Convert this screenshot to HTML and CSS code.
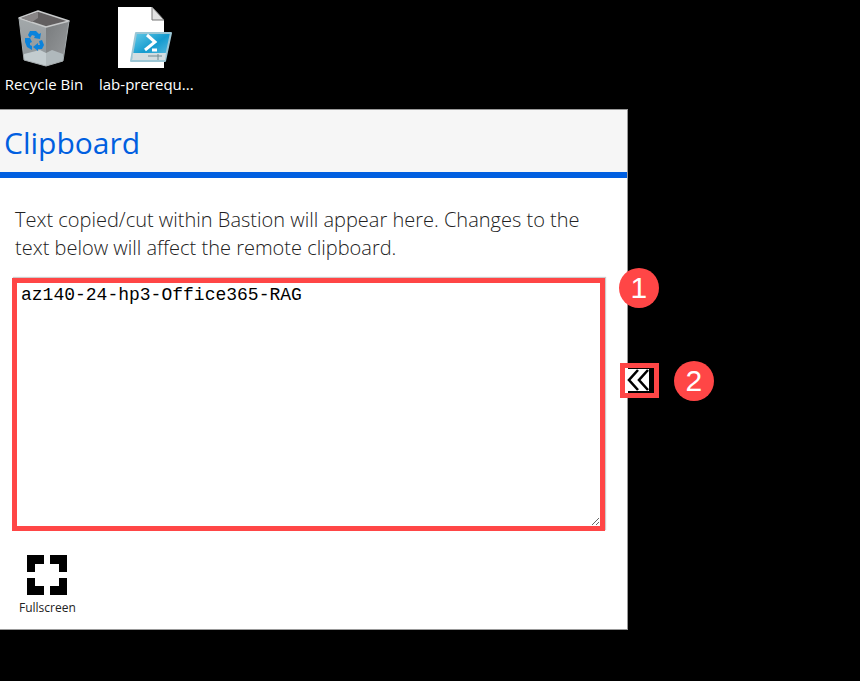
FILE: index.html
```html
<!DOCTYPE html>
<html lang="en">
<head>
<meta charset="utf-8">
<meta name="viewport" content="width=device-width, initial-scale=1">
<title>Bastion session</title>
<link rel="stylesheet" href="styles.css">
</head>
<body>
<main class="desktop">
  <nav class="shortcuts" aria-label="Desktop icons">
    <a class="shortcut" href="#recycle">
      <svg class="shortcut-icon" viewBox="0 0 64 64" aria-hidden="true">
        <defs>
          <linearGradient id="binLeft" x1="0" y1="0" x2="0" y2="1"><stop offset="0" stop-color="#a3a8aa"/><stop offset="1" stop-color="#8d9599"/></linearGradient>
          <linearGradient id="binRight" x1="0" y1="0" x2="1" y2="1"><stop offset="0" stop-color="#787b7d"/><stop offset="1" stop-color="#999c9e"/></linearGradient>
        </defs>
        <path d="M7 14 34 23 34 62 12 56Z" fill="url(#binLeft)"/>
        <path d="M34 23 57 17 51 57 34 62Z" fill="url(#binRight)"/>
        <path d="M12 50 28 46 34 49 34 62 12 56Z" fill="#c3cccf"/>
        <path d="M34 49 40 46 51 50 51 57 34 62Z" fill="#b0b9bc"/>
        <path d="M7 14 26 7 57 17 34 23Z" fill="#625f60" stroke="#c8cacb" stroke-width="1.5" stroke-linejoin="round"/>
        <path d="M26 8 26 14 20 18 9 14Z" fill="#888586"/>
        <path d="M7 14 12 56 34 62 51 57 57 17" fill="none" stroke="#a4aaac"/>
        <g fill="#0b83dc">
          <path d="M16 31 18 27 24 27 27 30 29 29 28 35 22 34 23 32 20 31 18 34Z"/>
          <path d="M13 34 18 34 20 38 18 39 18 41 20 42 20 46 15 43 13 38Z"/>
          <path d="M27 37 30 36 32 41 30 45 26 45 26 47 21 43 26 39 26 41 28 41Z"/>
        </g>
      </svg>
      <span class="shortcut-label">Recycle Bin</span>
    </a>
    <a class="shortcut" href="#lab">
      <svg class="shortcut-icon" viewBox="0 0 64 64" aria-hidden="true">
        <defs><linearGradient id="shell" x1="0" y1="0" x2="1" y2="1"><stop offset="0" stop-color="#69cde9"/><stop offset=".5" stop-color="#159bcf"/><stop offset="1" stop-color="#70c6e5"/></linearGradient></defs>
        <path d="M4 3H38L50 16V64H4Z" fill="#fff"/>
        <path d="M38 3V16H50Z" fill="#e2e2e2" stroke="#777"/>
        <path d="M22 29H57L51 57H17Z" fill="url(#shell)" stroke="#9bc6d5" stroke-width="2" stroke-linejoin="round"/>
        <path d="M19 49H52L51 56H18Z" fill="#d3dde1"/>
        <path d="M33 31 41 38 31 46M38 46H43" fill="none" stroke="#fff" stroke-width="3"/>
        <path d="M34 52H48M44 50V56" stroke="#718b94"/>
      </svg>
      <span class="shortcut-label">lab-prerequ...</span>
    </a>
  </nav>

  <section class="clipboard" aria-labelledby="clipboard-title">
    <header class="clipboard-header"><h1 id="clipboard-title">Clipboard</h1></header>
    <div class="clipboard-body">
      <label class="hint" for="clipboard-text">Text copied/cut within Bastion will appear here. Changes to the text below will affect the remote clipboard.</label>
      <div class="editor">
        <textarea id="clipboard-text" spellcheck="false">az140-24-hp3-Office365-RAG</textarea>
        <span class="callout callout-one">1</span>
      </div>
      <button class="fullscreen" type="button">
        <svg viewBox="0 0 40 40" aria-hidden="true"><path d="M0 0H17V9H8V17H0ZM23 0H40V17H32V9H23ZM0 23H8V31H17V40H0ZM32 23H40V40H23V31H32Z"/></svg>
        <span>Fullscreen</span>
      </button>
    </div>
    <div class="handle">
      <button class="collapse" type="button" aria-label="Collapse panel">
        <svg viewBox="0 0 29 25" aria-hidden="true">
          <path d="M0 0H3V25H0Z" fill="#fff"/>
          <path d="M3 1H24V23H3Z" fill="#fff"/>
          <path d="M13 2 4 12 13 22M23 2 14 12 23 22" fill="none" stroke="#000" stroke-width="2.600"/>
        </svg>
      </button>
      <span class="callout">2</span>
    </div>
  </section>
</main>
</body>
</html>
```
FILE: styles.css
```css
* { box-sizing: border-box; }
body {
  margin: 0;
  background: #000;
  font-family: "Open Sans", "Noto Sans", sans-serif;
}
button { font: inherit; cursor: pointer; }
.desktop { min-height: 100vh; }
.shortcuts {
  display: flex;
  gap: 13px;
  height: 109px;
  padding: 4px 0 0 2px;
}
.shortcut {
  display: flex;
  flex-direction: column;
  align-items: center;
  gap: 6px;
  min-width: 84px;
  color: #fff;
  text-decoration: none;
}
.shortcut-icon { width: 64px; height: 64px; }
.shortcut-label { font-size: 15px; line-height: 20px; white-space: nowrap; }
.clipboard {
  position: relative;
  width: 73%;
  background: #fff;
  border: 1px solid #999;
  border-left: 0;
}
.clipboard-header {
  padding: 15px 4px 11px;
  background: #f6f6f6;
  border-bottom: 6px solid #005fe0;
}
h1 {
  margin: 0;
  color: #005fe0;
  font-size: 30px;
  font-weight: 400;
  line-height: 36px;
}
.clipboard-body { padding: 28px 22px 13px 12px; }
.hint {
  display: block;
  padding: 0 3px;
  color: #222;
  font-size: 20px;
  font-weight: 300;
  line-height: 28px;
}
.editor { position: relative; margin-top: 16px; }
textarea {
  display: block;
  width: 100%;
  height: 253px;
  padding: 2px 4px;
  border: 5px solid #ff4646;
  border-radius: 0;
  outline: 0;
  background: #fff;
  box-shadow: 1px -1px 1px #ccc;
  color: #000;
  font-family: "Liberation Mono", monospace;
  font-size: 18px;
  line-height: 20px;
  resize: vertical;
}
.fullscreen {
  display: flex;
  flex-direction: column;
  align-items: center;
  gap: 5px;
  margin: 24px 0 0 7px;
  padding: 0;
  border: 0;
  background: none;
  color: #222;
  font-size: 12px;
  line-height: 16px;
}
.fullscreen svg { width: 40px; height: 40px; }
.callout {
  display: grid;
  place-items: center;
  width: 40px;
  height: 40px;
  border-radius: 50%;
  background: #ff4646;
  color: #fff;
  font-family: "Liberation Sans", sans-serif;
  font-size: 30px;
  line-height: 32px;
}
.callout-one { position: absolute; top: -10px; right: -54px; }
.handle {
  position: absolute;
  top: 50%;
  left: calc(100% - 7px);
  display: flex;
  align-items: center;
  gap: 15px;
  transform: translateY(-9px);
}
.collapse {
  padding: 0;
  border: 5px solid #ff4646;
  background: #000;
}
.collapse svg { display: block; width: 29px; height: 25px; }
```
